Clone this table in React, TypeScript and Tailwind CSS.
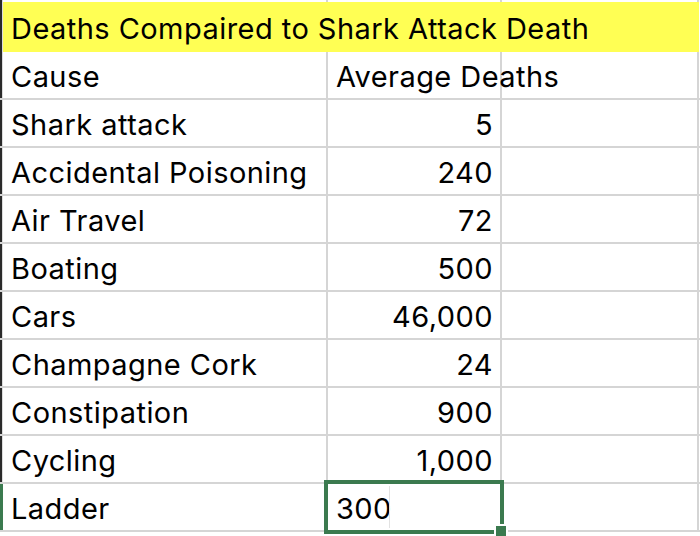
import React from "react";

const rows: { a: string; b: string }[] = [
  { a: "Shark attack", b: "5" },
  { a: "Accidental Poisoning", b: "240" },
  { a: "Air Travel", b: "72" },
  { a: "Boating", b: "500" },
  { a: "Cars", b: "46,000" },
  { a: "Champagne Cork", b: "24" },
  { a: "Constipation", b: "900" },
  { a: "Cycling", b: "1,000" },
];

const font = { fontFamily: "Inter, 'Liberation Sans', sans-serif" };

function LeftBar({ green = false }: { green?: boolean }) {
  return (
    <div className="flex h-full shrink-0">
      <div className={green ? "w-[3px] bg-[#3b7a4f]" : "w-[2px] bg-[#2a2a2a]"} />
      <div className={green ? "w-0" : "w-[1px] bg-[#dcdcdc]"} />
    </div>
  );
}

function Cell({ children, w, right = false }: { children?: React.ReactNode; w: string; right?: boolean }) {
  return (
    <div
      className={`${w} h-full shrink-0 flex items-end pb-[7px] ${right ? "justify-end pr-[7px]" : "pl-[8px]"} border-r-2 border-[#d5d5d5] text-[29px] leading-none tracking-[0.45px] text-black whitespace-nowrap`}
    >
      {children}
    </div>
  );
}

export default function App() {
  return (
    <div className="w-[700px] h-[536px] bg-white overflow-hidden flex flex-col" style={font}>
      <div className="h-[2px] shrink-0 flex">
        <LeftBar />
        <div className="w-[325px] border-r-2 border-[#d5d5d5]" />
        <div className="w-[174px] border-r-2 border-[#d5d5d5]" />
        <div className="w-[197px] border-r-2 border-[#d5d5d5]" />
      </div>
      <div className="h-[50px] shrink-0 flex">
        <LeftBar />
        <div className="w-[696px] h-full bg-[#ffff54] flex items-end pb-[9px] pl-[8px] text-[29px] leading-none tracking-[0.45px] text-black whitespace-nowrap">
          Deaths Compaired to Shark Attack Death
        </div>
      </div>
      <div className="h-[48px] shrink-0 flex border-b-2 border-[#d5d5d5]">
        <LeftBar />
        <Cell w="w-[325px]">Cause</Cell>
        <Cell w="w-[174px]">Average Deaths</Cell>
        <Cell w="w-[197px]" />
      </div>
      {rows.map((r) => (
        <div key={r.a} className="h-[48px] shrink-0 flex border-b-2 border-[#d5d5d5]">
          <LeftBar />
          <Cell w="w-[325px]">{r.a}</Cell>
          <Cell w="w-[174px]" right>
            {r.b}
          </Cell>
          <Cell w="w-[197px]" />
        </div>
      ))}
      <div className="relative h-[48px] shrink-0 flex border-b-2 border-[#d5d5d5]">
        <LeftBar green />
        <Cell w="w-[325px]">Ladder</Cell>
        <Cell w="w-[174px]">300</Cell>
        <Cell w="w-[197px]" />
        <div className="absolute left-[324px] top-[-4px] w-[180px] h-[54px] border-4 border-[#3b7a4f]" />
        <div className="absolute left-[389px] top-[2px] w-[1px] h-[42px] bg-[#e2e2e2]" />
        <div className="absolute left-[494px] top-[40px] w-[14px] h-[14px] border-2 border-white bg-[#3b7a4f]" />
      </div>
    </div>
  );
}
